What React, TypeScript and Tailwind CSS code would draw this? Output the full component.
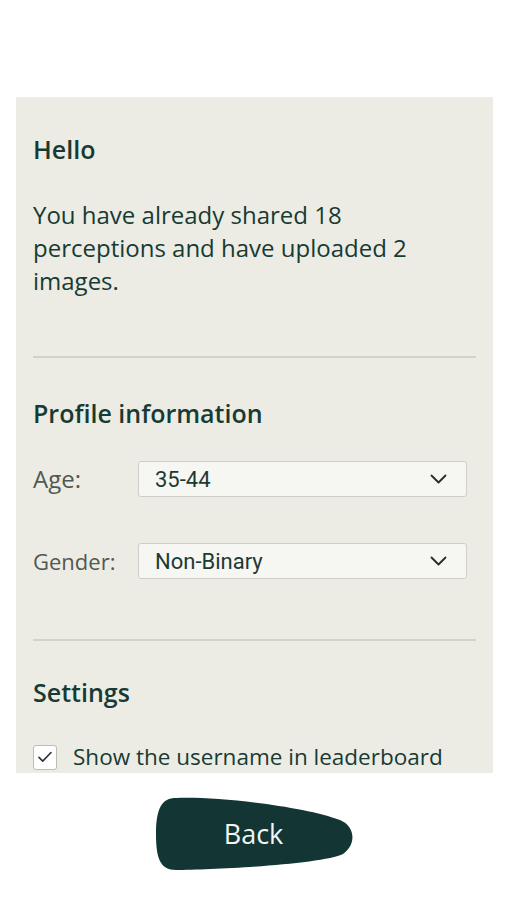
import * as React from 'react';

const ChevronDown = () => (
  <svg width="17" height="10" viewBox="0 0 17 10" fill="none" stroke="#2a2a2a" strokeWidth={1.8} strokeLinecap="round" strokeLinejoin="round">
    <path d="M1.5 1.5l7 7 7-7" />
  </svg>
);

const SelectBox: React.FC<{ value: string }> = ({ value }) => (
  <div className="flex h-[36px] flex-1 items-center justify-between rounded-[3px] border border-[#cfcfca] bg-[#f6f6f3] pl-[16px] pr-[19px] text-[22px] text-[#1c3a34] [font-family:Roboto,sans-serif]">
    <span>{value}</span>
    <ChevronDown />
  </div>
);

const Divider = () => <div className="h-[2px] bg-[#d2d2ca]" />;

export default function App() {
  return (
    <div className="min-h-[900px] bg-white pt-[97px] text-[#173b34] [font-family:'Open_Sans',sans-serif]">
      <div className="ml-[16px] mr-[14px] h-[676px] overflow-hidden bg-[#ecece4] pl-[17px] pr-[17px]">
        <h2 className="mt-[35px] text-[25px] font-semibold leading-[34px]">Hello</h2>
        <p className="mt-[32px] pr-[40px] text-[24px] leading-[33px]">
          You have already shared 18 perceptions and have uploaded 2 images.
        </p>
        <div className="mt-[59px]">
          <Divider />
        </div>

        <h2 className="mt-[38px] text-[25px] font-semibold leading-[34px]">Profile information</h2>
        <div className="mt-[31px] flex items-center pr-[9px]">
          <span className="w-[105px] text-[24px] leading-[36px] text-[#525853]">Age:</span>
          <SelectBox value="35-44" />
        </div>
        <div className="mt-[46px] flex items-center pr-[9px]">
          <span className="w-[105px] text-[22px] leading-[36px] text-[#525853]">Gender:</span>
          <SelectBox value="Non-Binary" />
        </div>
        <div className="mt-[60px]">
          <Divider />
        </div>

        <h2 className="mt-[34px] text-[25px] font-semibold leading-[34px]">Settings</h2>
        <label className="mt-[33px] flex items-center gap-[16px]">
          <span className="flex h-[25px] w-[24px] items-center justify-center rounded-[3px] border border-[#bdbdb8] bg-white">
            <svg width="18" height="18" viewBox="0 0 24 24" fill="none" stroke="#333" strokeWidth={2.2} strokeLinecap="round" strokeLinejoin="round">
              <path d="M4 12.5l5 5L20 6" />
            </svg>
          </span>
          <span className="text-[22.5px] leading-[30px]">Show the username in leaderboard</span>
        </label>
      </div>

      <div className="mt-[23px] flex justify-center">
        <button className="relative flex h-[76px] w-[200px] items-center justify-center text-[27px] text-[#f2f5f2]">
          <svg className="absolute inset-0" width="200" height="76" viewBox="0 0 200 76">
            <path
              d="M22 2 C60 0, 150 10, 186 24 C201 30, 203 48, 189 58 C170 68, 60 74, 22 74 C6 74, 2 62, 2 38 C2 12, 8 2, 22 2 Z"
              fill="#133634"
            />
          </svg>
          <span className="relative">Back</span>
        </button>
      </div>
    </div>
  );
}
